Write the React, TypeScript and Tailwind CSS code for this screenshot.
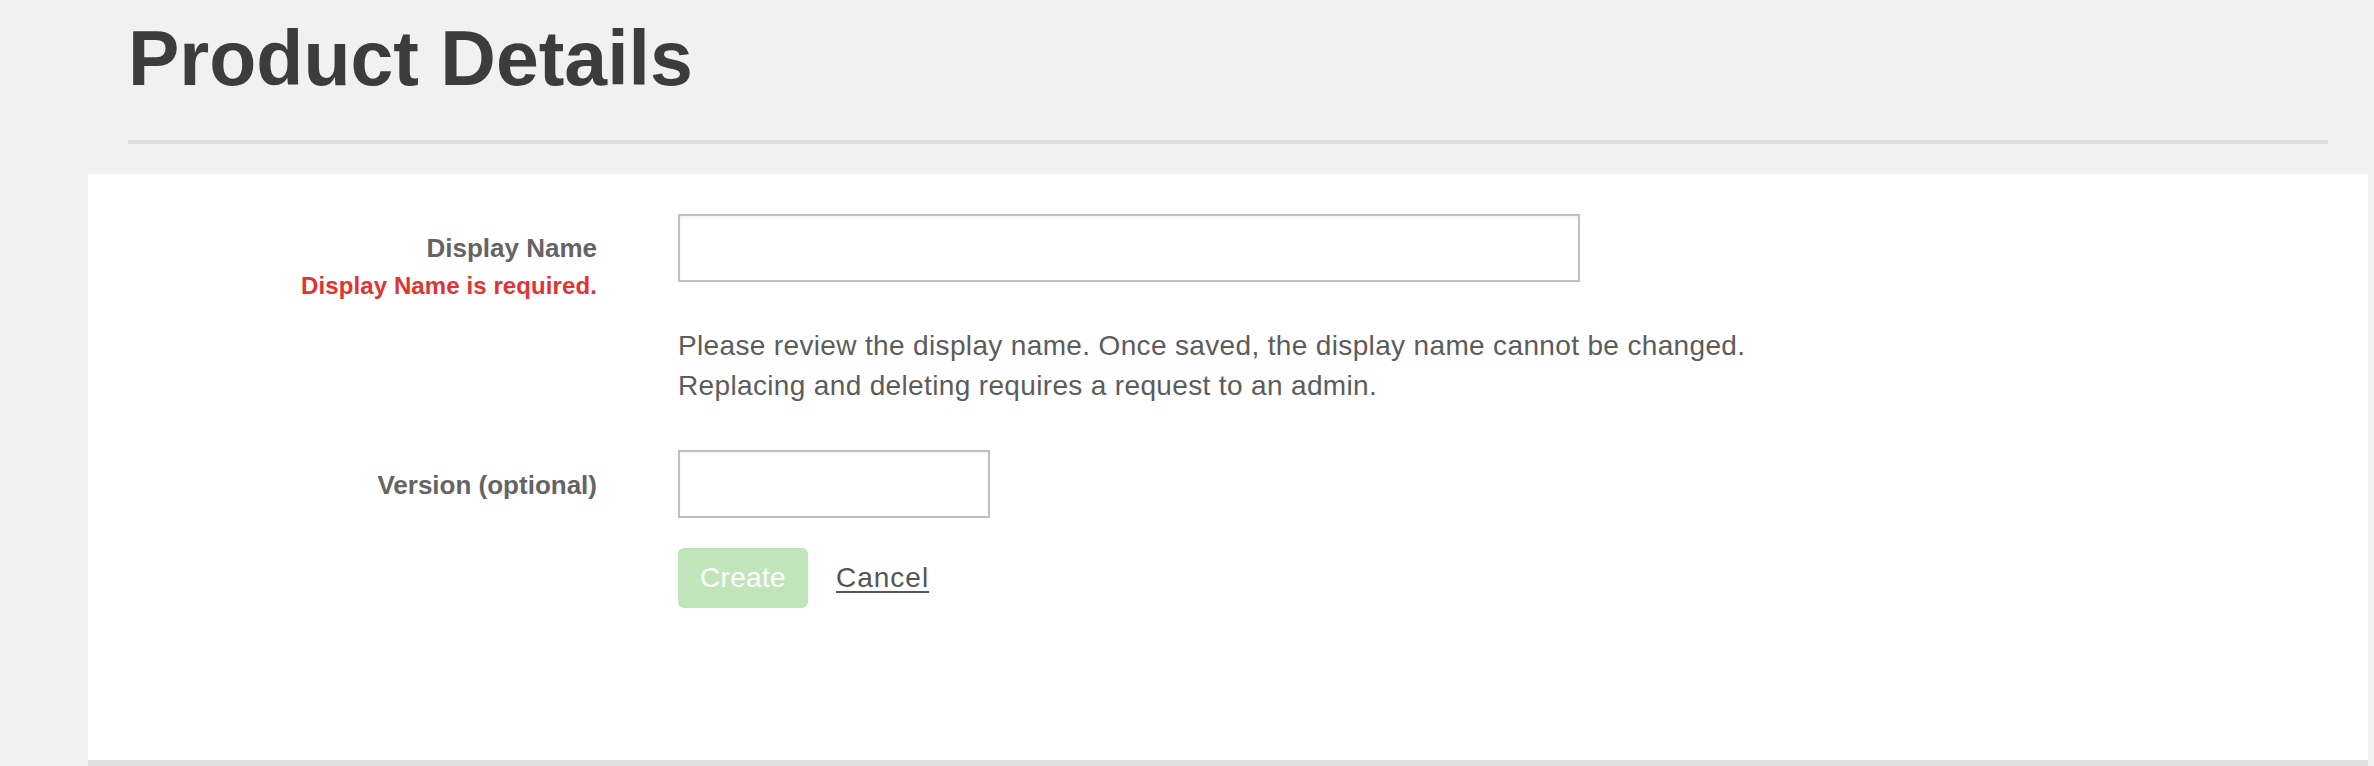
import React from "react";

export default function App() {
  return (
    <div className="min-h-screen bg-[#f1f1f1] font-['Liberation_Sans',Arial,Helvetica,sans-serif]">
      <div className="ml-[128px] mr-[46px] pt-[14px] pb-[38px] border-b-4 border-[#dedede]">
        <h1 className="text-[77px] leading-[88px] font-bold text-[#3c3c3c]">Product Details</h1>
      </div>
      <div className="mt-[30px] ml-[88px] mr-[6px] h-[592px] bg-white border-b-[6px] border-[#e0e0e0] pt-[40px]">
        <div className="flex">
          <div className="w-[509px] shrink-0 text-right pt-[18px]">
            <div className="text-[26px] leading-[32px] font-bold text-[#646464]">Display Name</div>
            <div className="mt-[8px] text-[24px] leading-[28px] font-bold tracking-[0.1px] text-[#e3322f]">Display Name is required.</div>
          </div>
          <div className="ml-[81px]">
            <input
              type="text"
              className="block w-[902px] h-[68px] border-2 border-[#bfbfbf] bg-white shadow-[inset_0_2px_3px_rgba(0,0,0,0.05)] outline-none"
            />
            <p className="mt-[44px] text-[28px] leading-[40px] tracking-[0.35px] text-[#5c5c5c]">
              Please review the display name. Once saved, the display name cannot be changed.
              <br />
              Replacing and deleting requires a request to an admin.
            </p>
          </div>
        </div>
        <div className="flex mt-[44px]">
          <div className="w-[509px] shrink-0 text-right pt-[19px]">
            <div className="text-[26px] leading-[32px] font-bold text-[#646464]">Version (optional)</div>
          </div>
          <div className="ml-[81px]">
            <input
              type="text"
              className="block w-[312px] h-[68px] border-2 border-[#bfbfbf] bg-white shadow-[inset_0_2px_3px_rgba(0,0,0,0.05)] outline-none"
            />
            <div className="mt-[30px] flex items-center">
              <button className="w-[130px] h-[60px] rounded-[6px] bg-[#c0e5bb] text-white text-[28px] leading-[60px] tracking-[0.3px]">
                Create
              </button>
              <a className="ml-[28px] text-[28px] leading-[40px] tracking-[1px] text-[#555555] underline underline-offset-[4px] decoration-[2px]">
                Cancel
              </a>
            </div>
          </div>
        </div>
      </div>
    </div>
  );
}
